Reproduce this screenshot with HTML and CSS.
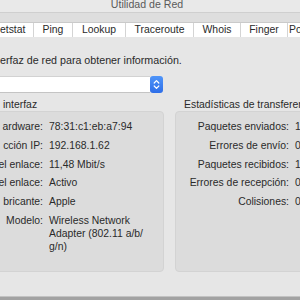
FILE: index.html
```html
<!DOCTYPE html>
<html lang="es">
  <head>
    <meta charset="UTF-8" />
    <meta name="viewport" content="width=device-width, initial-scale=1.0" />
    <title>Utilidad de Red</title>
    <link rel="stylesheet" href="styles.css">
  </head>
  <body>
    <div class="window">
      <div class="titlebar">Utilidad de Red</div>
      <div class="toolbar"></div>

      <nav class="tabs">
        <span class="tab first">etstat</span>
        <span class="tab">Ping</span>
        <span class="tab">Lookup</span>
        <span class="tab">Traceroute</span>
        <span class="tab">Whois</span>
        <span class="tab">Finger</span>
        <span class="tab">Port Scan</span>
      </nav>

      <main class="content">
        <p class="intro">erfaz de red para obtener información.</p>

        <div class="popup">
          <span class="field"></span>
          <span class="stepper">
            <svg width="13" height="17" viewBox="0 0 13 17">
              <path d="M4.2 7 L6.5 4.7 L8.8 7" fill="none" stroke="#fff" stroke-width="1.2" stroke-linecap="round" stroke-linejoin="round" />
              <path d="M4.2 10 L6.5 12.3 L8.8 10" fill="none" stroke="#fff" stroke-width="1.2" stroke-linecap="round" stroke-linejoin="round" />
            </svg>
          </span>
        </div>

        <div class="groups">
          <section class="group info">
            <h2>interfaz</h2>
            <dl class="box">
              <dt>ardware:</dt><dd>78:31:c1:eb:a7:94</dd>
              <dt>cción IP:</dt><dd>192.168.1.62</dd>
              <dt>el enlace:</dt><dd>11,48 Mbit/s</dd>
              <dt>el enlace:</dt><dd>Activo</dd>
              <dt>bricante:</dt><dd>Apple</dd>
              <dt>Modelo:</dt><dd>Wireless Network<br>Adapter (802.11 a/b/<br>g/n)</dd>
            </dl>
          </section>

          <section class="group stats">
            <h2>Estadísticas de transferencia</h2>
            <dl class="box">
              <dt>Paquetes enviados:</dt><dd>1</dd>
              <dt>Errores de envío:</dt><dd>0</dd>
              <dt>Paquetes recibidos:</dt><dd>1</dd>
              <dt>Errores de recepción:</dt><dd>0</dd>
              <dt>Colisiones:</dt><dd>0</dd>
            </dl>
          </section>
        </div>
      </main>

      <div class="edge"></div>
    </div>
  </body>
</html>
```

FILE: styles.css
```css
body {
  margin: 0;
  width: 300px;
  height: 300px;
  overflow: hidden;
  background-color: #e6e6e6;
  font-family: "Liberation Sans", Arial, sans-serif;
  font-size: 10.4px;
  color: #2a2a2a;
}

.window {
  display: flex;
  flex-direction: column;
  height: 300px;
}

.titlebar {
  height: 12px;
  line-height: 8px;
  padding-right: 6px;
  text-align: center;
  font-size: 10.6px;
  color: #5a5a5a;
  background-color: #e9e9e9;
  border-bottom: 1px solid #cfcfcf;
  white-space: nowrap;
}

.toolbar {
  height: 9px;
  background-color: #dedede;
}

.tabs {
  display: grid;
  grid-template-columns: 33px 39px 53px 68px 47px 47px 1fr;
  height: 14px;
  line-height: 14px;
  background-color: #fff;
  border-top: 1px solid #cacaca;
  white-space: nowrap;
  overflow: hidden;
}

.tab {
  text-align: center;
  border-left: 1px solid #d4d4d4;
}

.tab.first {
  text-align: left;
  border-left: none;
}

.tab:last-child {
  text-align: left;
  padding-left: 1px;
}

.content {
  flex: 1;
  padding-top: 17px;
}

.intro {
  margin: 0;
  font-size: 10.7px;
  line-height: 13px;
  white-space: nowrap;
}

.popup {
  display: flex;
  width: 163px;
  height: 17px;
  margin-top: 9px;
}

.field {
  flex: 1;
  background-color: #fff;
  border-top: 1px solid #d2d2d2;
  border-bottom: 1px solid #c4c4c4;
}

.stepper {
  width: 13px;
  border-radius: 3px;
  background: linear-gradient(#4f95f9, #2e6ee8);
}

.stepper svg {
  display: block;
}

.groups {
  display: flex;
  gap: 11px;
  margin-top: 5px;
}

.group h2 {
  margin: 0;
  padding-left: 9px;
  font-size: 10.4px;
  font-weight: normal;
  line-height: 13px;
  white-space: nowrap;
}

.info {
  width: 170px;
  margin-left: -6px;
  flex-shrink: 0;
}

.stats {
  width: 140px;
  flex-shrink: 0;
}

.box {
  display: grid;
  align-content: start;
  column-gap: 6px;
  row-gap: 5.8px;
  height: 161px;
  box-sizing: border-box;
  margin: 0;
  padding-top: 8px;
  line-height: 13px;
  background-color: #dcdcdc;
  border: 1px solid #d3d3d3;
  border-radius: 4px;
}

.info .box {
  grid-template-columns: 48px 1fr;
}

.stats .box {
  grid-template-columns: 113px 1fr;
}

.box dt {
  text-align: right;
  white-space: nowrap;
}

.box dd {
  margin: 0;
  white-space: nowrap;
}

.edge {
  height: 3px;
  background-color: #a2a2a2;
  border-top: 1px solid #c2c2c2;
}
```
